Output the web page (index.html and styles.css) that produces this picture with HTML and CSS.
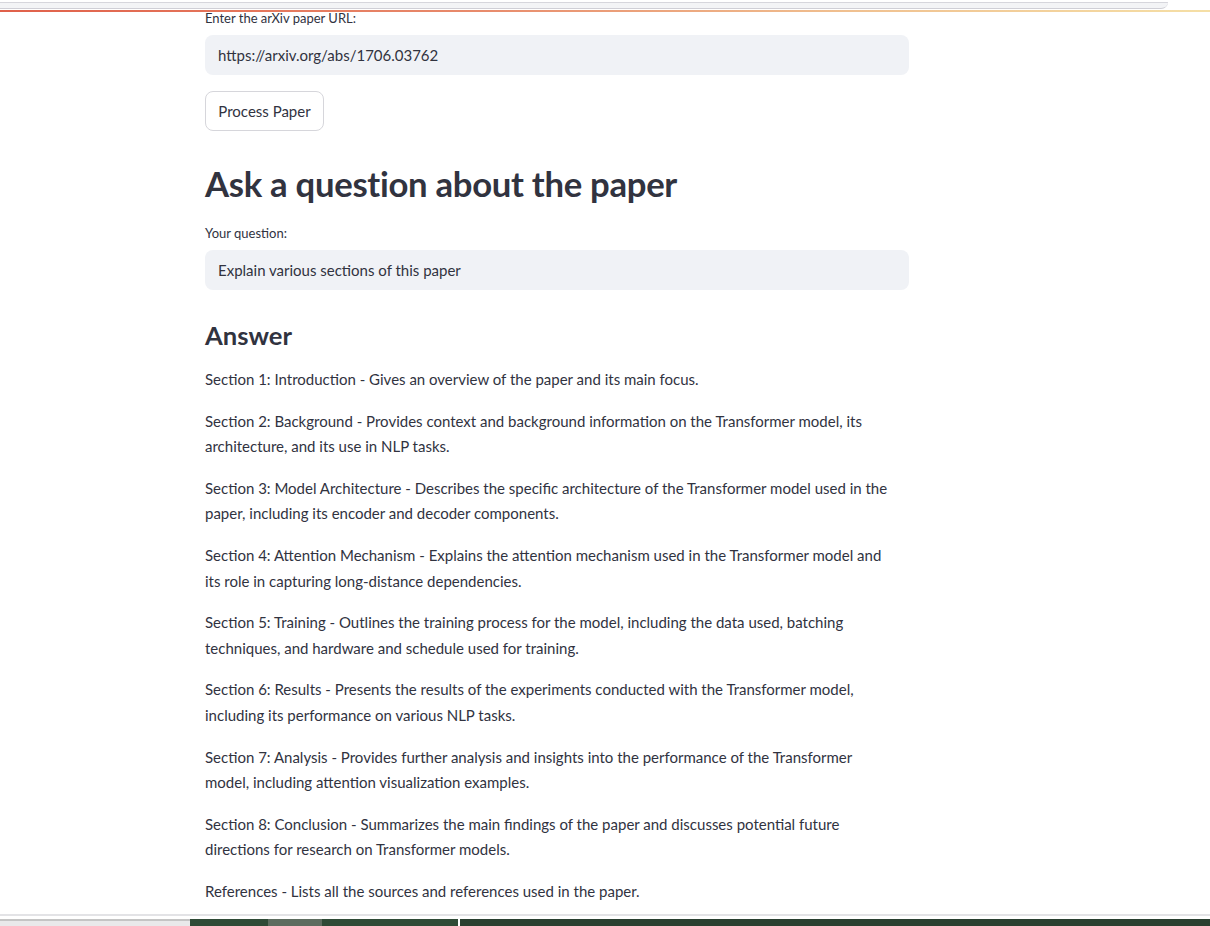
FILE: index.html
```html
<!DOCTYPE html>
<html lang="en">
<head>
<meta charset="utf-8">
<title>arXiv Paper Q&amp;A</title>
<link rel="stylesheet" href="styles.css">
</head>
<body>
<div class="chrome-top">
  <div class="chrome-pill"></div>
  <div class="decoration"></div>
</div>

<main class="block">
  <label class="label">Enter the arXiv paper URL:</label>
  <div class="input">https://arxiv.org/abs/1706.03762</div>
  <button class="btn">Process Paper</button>

  <h2 class="h2">Ask a question about the paper</h2>
  <label class="label">Your question:</label>
  <div class="input">Explain various sections of this paper</div>

  <h3 class="h3">Answer</h3>
  <div class="answer">
    <p>Section 1: Introduction - Gives an overview of the paper and its main focus.</p>
    <p>Section 2: Background - Provides context and background information on the Transformer model, its architecture, and its use in NLP tasks.</p>
    <p>Section 3: Model Architecture - Describes the specific architecture of the Transformer model used in the paper, including its encoder and decoder components.</p>
    <p>Section 4: Attention Mechanism - Explains the attention mechanism used in the Transformer model and its role in capturing long-distance dependencies.</p>
    <p>Section 5: Training - Outlines the training process for the model, including the data used, batching techniques, and hardware and schedule used for training.</p>
    <p>Section 6: Results - Presents the results of the experiments conducted with the Transformer model, including its performance on various NLP tasks.</p>
    <p>Section 7: Analysis - Provides further analysis and insights into the performance of the Transformer model, including attention visualization examples.</p>
    <p>Section 8: Conclusion - Summarizes the main findings of the paper and discusses potential future directions for research on Transformer models.</p>
    <p>References - Lists all the sources and references used in the paper.</p>
  </div>
</main>

<div class="chrome-bottom">
  <div class="bottom-line"></div>
  <div class="taskbar">
    <div class="seg seg-light"></div>
    <div class="seg seg-dark1"></div>
    <div class="seg seg-thumb"></div>
    <div class="seg seg-dark2"></div>
    <div class="seg seg-gap"></div>
    <div class="seg seg-dark3"></div>
  </div>
</div>
</body>
</html>
```

FILE: styles.css
```css
html, body {
  margin: 0;
  padding: 0;
  background: #ffffff;
  overflow: hidden;
  height: 926px;
}

body {
  font-family: "Lato", "Open Sans", "Liberation Sans", sans-serif;
  color: #31333f;
}

.chrome-top {
  position: fixed;
  top: 0;
  left: 0;
  right: 0;
  height: 13px;
  z-index: 10;
  pointer-events: none;
}

.chrome-pill {
  height: 7px;
  width: 1168px;
  background: #f3f4f6;
  border-top: 1px solid #d6d6dc;
  border-bottom: 1px solid #cfcfd6;
  border-bottom-right-radius: 10px;
  margin-top: 2px;
  box-sizing: border-box;
}

.decoration {
  position: absolute;
  top: 10px;
  left: 0;
  right: 0;
  height: 2px;
  background: linear-gradient(90deg, #e0604a 0%, #e88b6c 40%, #f0c090 70%, #f5dfa6 100%);
}

.block {
  width: 704px;
  margin-left: 205px;
  padding-top: 6px;
  display: flex;
  flex-direction: column;
  align-items: flex-start;
}

.label {
  font-size: 13px;
  line-height: 24px;
  height: 24px;
  margin-bottom: 5px;
  color: #31333f;
}

.input {
  box-sizing: border-box;
  width: 704px;
  height: 40px;
  background: #f0f2f6;
  border-radius: 8px;
  padding: 0 13px;
  font-size: 15px;
  line-height: 40px;
  color: #31333f;
}

.btn {
  margin-top: 16px;
  box-sizing: border-box;
  height: 40px;
  width: 119px;
  background: #ffffff;
  border: 1px solid #d6d6db;
  border-radius: 8px;
  font-family: inherit;
  font-size: 15px;
  color: #31333f;
  padding: 0;
}

.h2 {
  margin: 31px 0 16px;
  font-size: 34.7px;
  line-height: 43px;
  font-weight: 700;
  letter-spacing: -0.3px;
  color: #31333f;
}

.h3 {
  margin: 28px 0 15px;
  font-size: 25.6px;
  line-height: 34px;
  font-weight: 700;
  color: #31333f;
}

.answer {
  max-width: 688px;
}

.answer p {
  margin: 0 0 16px;
  font-size: 15px;
  line-height: 25.6px;
  color: #31333f;
}

.chrome-bottom {
  position: fixed;
  left: 0;
  right: 0;
  bottom: 0;
  height: 12px;
  background: #ffffff;
  z-index: 10;
}

.bottom-line {
  height: 2px;
  background: #e3e3e6;
  margin-bottom: 3px;
}

.taskbar {
  display: flex;
  height: 7px;
}

.seg-light { width: 190px; background: #e9e9ea; border-top: 2px solid #c4c4c4; box-sizing: border-box; }
.seg-dark1 { width: 78px; background: #2f4a36; }
.seg-thumb { width: 54px; background: #5d6c5f; }
.seg-dark2 { width: 136px; background: #2f4a36; }
.seg-gap { width: 2px; background: #ffffff; }
.seg-dark3 { flex: 1; background: #2a4030; }
```
